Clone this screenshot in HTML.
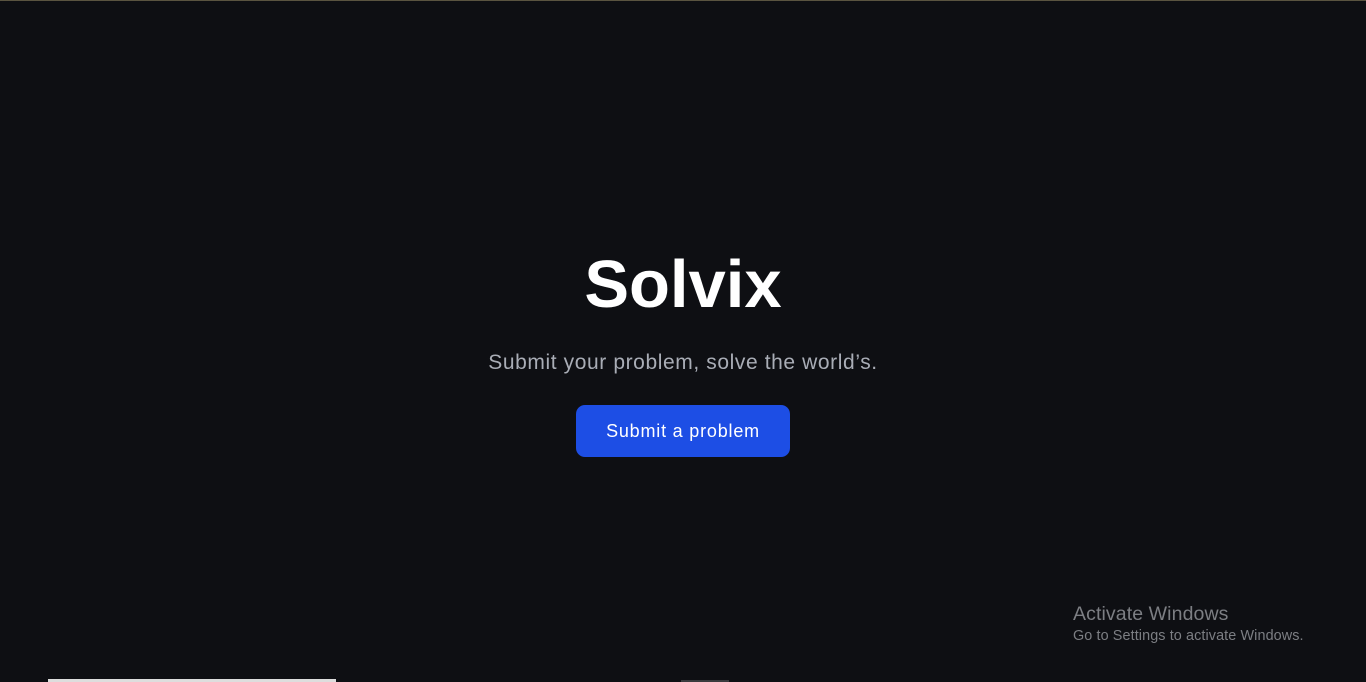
<!DOCTYPE html>
<html><head><style>
html,body{margin:0;padding:0;width:1366px;height:682px;overflow:hidden;background:#0e0f13;font-family:"Liberation Sans",sans-serif;position:relative}
.top{position:absolute;top:0;left:0;right:0;height:1px;background:#5a5440}
h1{position:absolute;top:248px;left:0;width:1366px;text-align:center;margin:0;color:#fff;font-size:67px;font-weight:bold;letter-spacing:0px;line-height:74px}
p{position:absolute;top:350px;left:0;width:1366px;text-align:center;margin:0;color:#a9adb6;font-size:21px;letter-spacing:0.6px;line-height:26px}
.btn{position:absolute;left:576px;top:405px;width:214px;height:52px;background:#1d4ee5;border-radius:9px;color:#fff;font-size:18px;letter-spacing:0.8px;line-height:52px;text-align:center}
.aw{position:absolute;left:1073px;top:603px;color:#7c7e83;font-size:19.5px;letter-spacing:0.1px}
.aw2{position:absolute;left:1073px;top:628px;color:#7c7e83;font-size:14.4px;letter-spacing:0.1px}
.bar{position:absolute;left:48px;top:679px;width:288px;height:3px;background:#ddd}
.bar2{position:absolute;left:681px;top:680px;width:48px;height:2px;background:#3a3b3e}
</style></head><body>
<div class="top"></div>
<h1>Solvix</h1>
<p>Submit your problem, solve the world’s.</p>
<div class="btn">Submit a problem</div>
<div class="aw">Activate Windows</div>
<div class="aw2">Go to Settings to activate Windows.</div>
<div class="bar"></div><div class="bar2"></div>
</body></html>
